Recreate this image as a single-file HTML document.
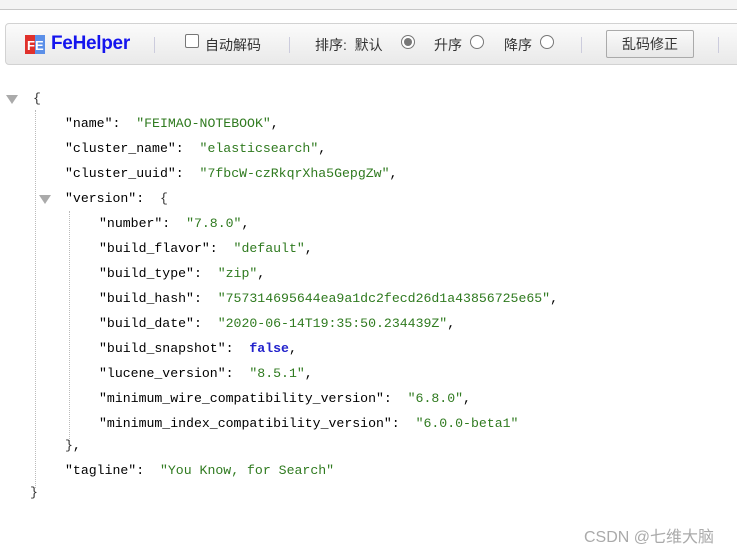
<!DOCTYPE html>
<html><head><meta charset="utf-8"><style>
body{margin:0;width:737px;height:551px;background:#fff;position:relative;overflow:hidden;font-family:"Liberation Sans","Noto Sans CJK SC",sans-serif}
.top{position:absolute;left:0;top:0;width:737px;height:9px;background:#f4f4f4;border-bottom:1px solid #c8c8c8}
.bar{position:absolute;left:5px;top:23px;width:760px;height:40px;border:1px solid #d2d2d2;border-radius:4px;background:linear-gradient(#fbfbfb,#e9e9e9);}
.t{position:absolute;font-size:14px;color:#333;white-space:nowrap}
.sep{position:absolute;top:37px;width:1px;height:16px;background:#ccd}
.radio{position:absolute;width:12px;height:12px;border:1px solid #777;border-radius:50%;background:#fff;top:35px}
.code{position:absolute;font-family:"Liberation Mono",monospace;font-size:13.2px;white-space:pre;color:#000;line-height:16px}
.s{color:#2f7a1f}.b{color:#2222cc;font-weight:bold}.br{color:#333}
.guide{position:absolute;border-left:1px dotted #bbb;width:0}
.tri{position:absolute;width:0;height:0;border-left:6px solid transparent;border-right:6px solid transparent;border-top:9px solid #aaa}
</style></head><body>
<div class="top"></div>
<div class="bar"></div>
<svg style="position:absolute;left:25px;top:35px" width="20" height="19"><rect width="10" height="19" fill="#e0312b"/><rect x="10" width="10" height="19" fill="#5b8fe8"/><text x="2" y="15" font-family="Liberation Sans" font-weight="bold" font-size="13" fill="#fff">FE</text></svg>
<div class="t" style="left:51px;top:33px;font-size:19px;font-weight:bold;color:#1414ee;letter-spacing:-0.3px">FeHelper</div>
<div class="sep" style="left:154px"></div>
<div style="position:absolute;left:185px;top:34px;width:12px;height:12px;border:1px solid #777;border-radius:2px;background:#fff"></div>
<div class="t" style="left:205px;top:35px">自动解码</div>
<div class="sep" style="left:289px"></div>
<div class="t" style="left:315px;top:35px">排序:&nbsp; 默认</div>
<div class="radio" style="left:401px"><div style="margin:2px;width:8px;height:8px;border-radius:50%;background:#777"></div></div>
<div class="t" style="left:434px;top:35px">升序</div>
<div class="radio" style="left:470px"></div>
<div class="t" style="left:504px;top:35px">降序</div>
<div class="radio" style="left:540px"></div>
<div class="sep" style="left:581px"></div>
<div style="position:absolute;left:606px;top:30px;width:86px;height:26px;border:1px solid #aaa;border-radius:2px;background:linear-gradient(#fafafa,#e8e8e8);font-size:14px;color:#333;text-align:center;line-height:26px">乱码修正</div>
<div class="sep" style="left:718px"></div>

<div class="tri" style="left:6px;top:95px"></div>
<div class="tri" style="left:39px;top:195px"></div>
<div class="guide" style="left:35px;top:110px;height:378px"></div>
<div class="guide" style="left:69px;top:211px;height:230px"></div>

<div class="code br" style="left:33px;top:91px">{</div>
<div class="code" style="left:65px;top:116px">"name":  <span class="s">"FEIMAO-NOTEBOOK"</span>,</div>
<div class="code" style="left:65px;top:141px">"cluster_name":  <span class="s">"elasticsearch"</span>,</div>
<div class="code" style="left:65px;top:166px">"cluster_uuid":  <span class="s">"7fbcW-czRkqrXha5GepgZw"</span>,</div>
<div class="code" style="left:65px;top:191px">"version":  <span class="br">{</span></div>
<div class="code" style="left:99px;top:216px">"number":  <span class="s">"7.8.0"</span>,</div>
<div class="code" style="left:99px;top:241px">"build_flavor":  <span class="s">"default"</span>,</div>
<div class="code" style="left:99px;top:266px">"build_type":  <span class="s">"zip"</span>,</div>
<div class="code" style="left:99px;top:291px">"build_hash":  <span class="s">"757314695644ea9a1dc2fecd26d1a43856725e65"</span>,</div>
<div class="code" style="left:99px;top:316px">"build_date":  <span class="s">"2020-06-14T19:35:50.234439Z"</span>,</div>
<div class="code" style="left:99px;top:341px">"build_snapshot":  <span class="b">false</span>,</div>
<div class="code" style="left:99px;top:366px">"lucene_version":  <span class="s">"8.5.1"</span>,</div>
<div class="code" style="left:99px;top:391px">"minimum_wire_compatibility_version":  <span class="s">"6.8.0"</span>,</div>
<div class="code" style="left:99px;top:416px">"minimum_index_compatibility_version":  <span class="s">"6.0.0-beta1"</span></div>
<div class="code" style="left:65px;top:438px"><span class="br">}</span>,</div>
<div class="code" style="left:65px;top:463px">"tagline":  <span class="s">"You Know, for Search"</span></div>
<div class="code br" style="left:30px;top:485px">}</div>

<div class="t" style="left:584px;top:523px;color:#aaa;font-size:16px">CSDN @七维大脑</div>
</body></html>
